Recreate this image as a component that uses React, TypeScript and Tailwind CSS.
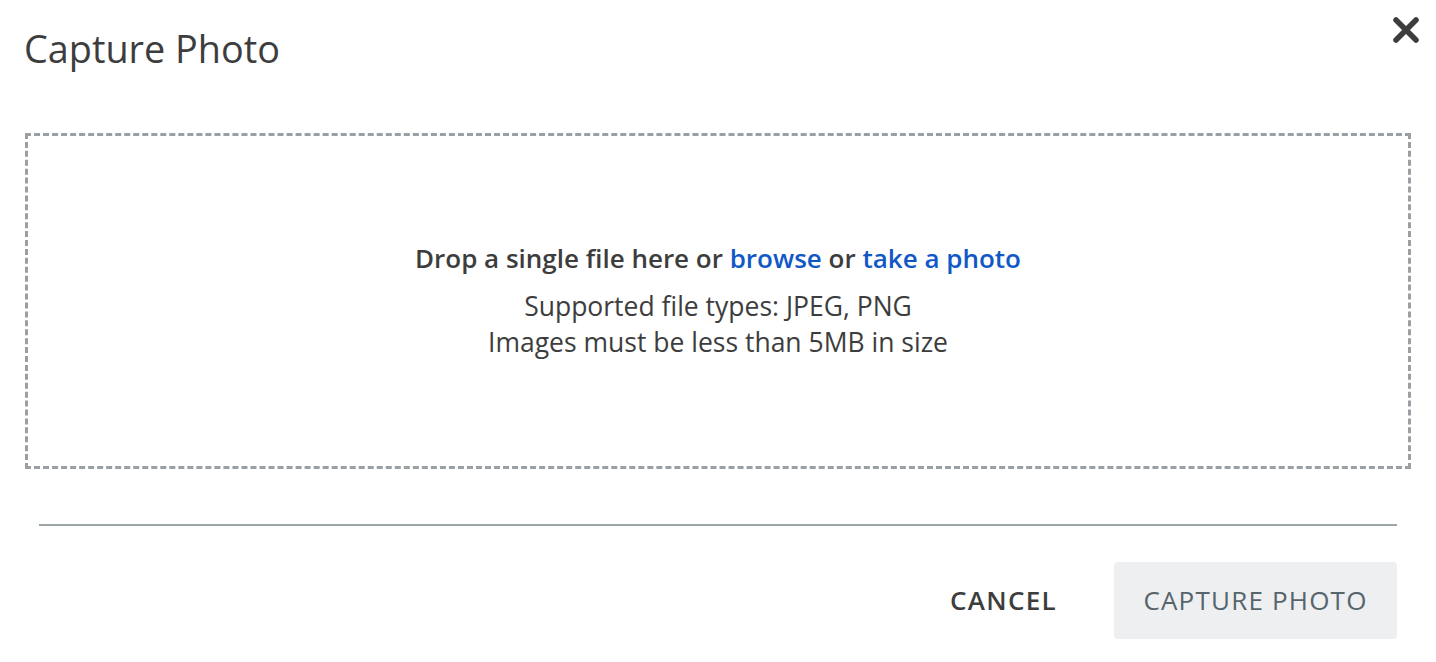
import { FC } from "react"

const CloseIcon: FC = () => (
  <svg width="28" height="28" viewBox="0 0 28 28" fill="none">
    <path d="M4 4L24 24M24 4L4 24" stroke="#3d3d3d" strokeWidth="5.5" strokeLinecap="round" />
  </svg>
)

const App: FC = () => {
  return (
    <div className="w-full h-[662px] bg-white text-[#3d3d3d] font-['Open_Sans',sans-serif] overflow-hidden">
      <div className="flex items-start justify-between pl-[24px] pr-[16px] pt-[27px]">
        <h1 className="text-[37.8px] leading-[44px] font-normal">Capture Photo</h1>
        <button className="mt-[-11px]">
          <CloseIcon />
        </button>
      </div>

      <div className="mx-[25px] mt-[62px] h-[336px] border-[3px] border-dashed border-[#9a9fa3] flex flex-col items-center justify-center">
        <p className="text-[26px] font-semibold leading-[32px]">
          Drop a single file here or <a className="text-[#1158c7] cursor-pointer">browse</a> or{" "}
          <a className="text-[#1158c7] cursor-pointer">take a photo</a>
        </p>
        <p className="mt-[14px] text-[26.5px] leading-[36px] text-center">
          Supported file types: JPEG, PNG
          <br />
          Images must be less than 5MB in size
        </p>
      </div>

      <div className="mx-[39px] mt-[55px] h-[2px] bg-[#9ba4a7]" />

      <div className="flex justify-end items-center gap-[57px] pr-[39px] mt-[36px]">
        <button className="text-[26px] font-semibold tracking-[1.3px]">CANCEL</button>
        <button className="w-[283px] h-[77px] rounded-[4px] bg-[#eeeff1] text-[#56646b] text-[26px] tracking-[1.2px]">
          CAPTURE PHOTO
        </button>
      </div>
    </div>
  )
}

export default App
